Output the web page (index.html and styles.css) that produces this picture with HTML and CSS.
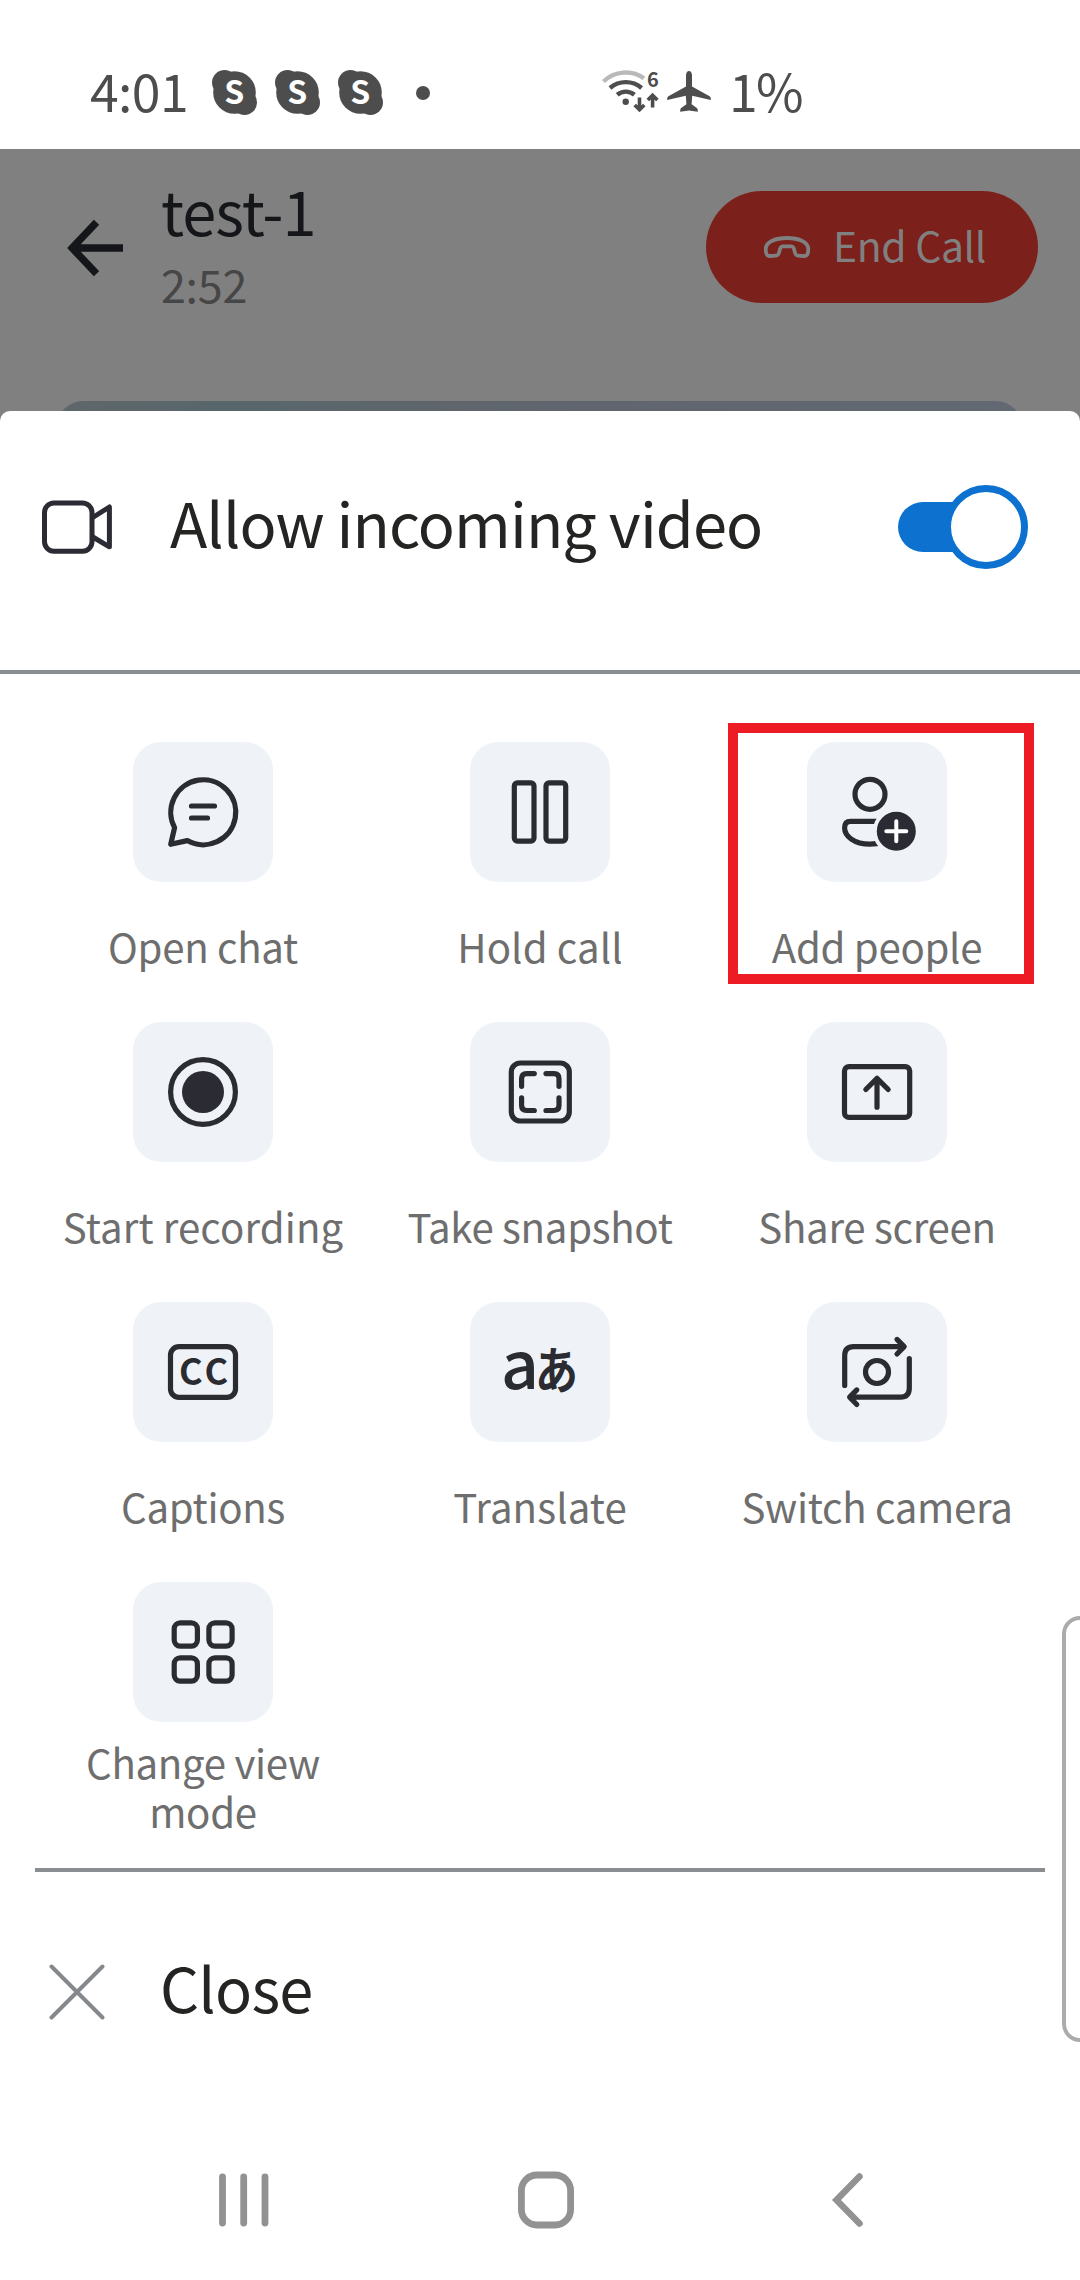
FILE: index.html
```html
<!DOCTYPE html>
<html lang="en">
<head>
<meta charset="utf-8">
<title>Call options</title>
<link rel="stylesheet" href="styles.css">
</head>
<body>
<div class="screen">
  <div class="status">
    <span class="status-text clock">4:01</span>
    <div class="notifs">
      <svg width="45" height="45" viewBox="0 0 45 45">
        <circle cx="22.5" cy="22.5" r="21.3"/><circle cx="12.5" cy="12.5" r="12.5"/><circle cx="32.5" cy="32.5" r="12.5"/>
        <text class="skype-s" x="22.3" y="34" text-anchor="middle">S</text>
      </svg>
      <svg width="45" height="45" viewBox="0 0 45 45">
        <circle cx="22.5" cy="22.5" r="21.3"/><circle cx="12.5" cy="12.5" r="12.5"/><circle cx="32.5" cy="32.5" r="12.5"/>
        <text class="skype-s" x="22.3" y="34" text-anchor="middle">S</text>
      </svg>
      <svg width="45" height="45" viewBox="0 0 45 45">
        <circle cx="22.5" cy="22.5" r="21.3"/><circle cx="12.5" cy="12.5" r="12.5"/><circle cx="32.5" cy="32.5" r="12.5"/>
        <text class="skype-s" x="22.3" y="34" text-anchor="middle">S</text>
      </svg>
    </div>
    <span class="dot"></span>
    <svg class="wifi" width="60" height="49" viewBox="0 0 60 49" fill="none" stroke="#4d4d4d" stroke-width="4.4">
      <path d="M3.5 13.5A32 32 0 0 1 44 10.3" stroke="#b9b9b9"/>
      <path d="M10 20A24.3 24.3 0 0 1 41.6 20"/>
      <path d="M17.2 26.7A13.5 13.5 0 0 1 34.4 26.7"/>
      <circle cx="25.7" cy="33.7" r="3.2" fill="#4d4d4d" stroke="none"/>
      <path d="M39.5 29.5V42M34.7 37L39.5 41.8L44.3 37M52.6 39.5V27.5M47.8 32L52.6 27.2L57.4 32" stroke-width="3.6"/>
      <text class="wifi-gen" x="53" y="19" text-anchor="middle">6</text>
    </svg>
    <svg class="plane" width="44" height="44" viewBox="0 0 44 44" fill="#4d4d4d">
      <path d="M22 1C23.8 1 25 3 25 5.5V16.5L42.6 26.2C43.4 26.7 43.8 27.5 43.8 28.5V30L25.2 25.7L24.6 34.2L29.8 38C30.6 38.7 30.8 39.6 30.8 41.8L22 40.6L13.2 41.8C13.2 39.6 13.4 38.7 14.2 38L19.4 34.2L18.8 25.7L.2 30V28.5C.2 27.5.6 26.7 1.4 26.2L19 16.5V5.5C19 3 20.2 1 22 1Z"/>
    </svg>
    <span class="status-text battery">1%</span>
  </div>

  <header class="call-header">
    <div class="call-bar">
      <svg class="back" width="56" height="58" viewBox="0 0 56 58" fill="none" stroke="#15161a" stroke-width="7.4">
        <path d="M56 29H5M29.5 3.2L5.2 29L29.5 54.8"/>
      </svg>
      <div class="call-title">
        <div class="name">test-1</div>
        <div class="time">2:52</div>
      </div>
      <div class="end-call">
        <svg width="48" height="24" viewBox="0 0 48 24" fill="none" stroke="#808080" stroke-width="3.8" stroke-linejoin="round">
          <path d="M24 3C35 3 45.3 6.5 45.3 14C45.3 19.5 43.8 21 41 21C38 21 35.5 20.6 34 20.3C30.5 19.5 32.5 11.3 28.5 11.3H19.5C15.5 11.3 17.5 19.5 14 20.3C12.5 20.6 10 21 7 21C4.2 21 2.7 19.5 2.7 14C2.7 6.5 13 3 24 3Z"/>
        </svg>
        <span>End Call</span>
      </div>
    </div>
    <div class="video-card"></div>
  </header>

  <main class="sheet">
    <div class="allow">
      <svg width="71" height="54" viewBox="0 0 71 54" fill="none" stroke="#2b2b33" stroke-width="5" stroke-linejoin="round">
        <rect x="2.5" y="3" width="47.5" height="48.2" rx="9.5"/>
        <path d="M50 18L67.4 7V46.8L50 36.5"/>
      </svg>
      <span class="allow-text">Allow incoming video</span>
      <span class="toggle"><span class="knob"></span></span>
    </div>

    <div class="options">
      <div class="option">
        <svg class="tile" viewBox="0 0 140 140">
          <path d="M41.6 85.6A32.5 32.5 0 1 1 54.3 98.6L37.7 102.3Z"/>
          <path d="M58.5 64H81.500M58.5 76H74.5"/>
        </svg>
        <div class="label">Open chat</div>
      </div>
      <div class="option">
        <svg class="tile" viewBox="0 0 140 140">
          <rect x="44.3" y="40.9" width="19.7" height="58.2" rx="3"/><rect x="76" y="40.9" width="19.7" height="58.2" rx="3"/>
        </svg>
        <div class="label loose">Hold call</div>
      </div>
      <div class="option">
        <svg class="tile" viewBox="0 0 140 140">
          <circle cx="63" cy="52.3" r="15"/>
          <path d="M76 79.3H43.5Q37.6 79.3 37.6 86C37.6 94 47 102.1 63 102.1Q70 102.1 76 100"/>
          <circle class="badge" cx="89.3" cy="89.3" r="21.5"/>
          <path class="plus" d="M79.3 89.3H99.300M89.3 79.3V99.3"/>
        </svg>
        <div class="label">Add people</div>
        <div class="marker"></div>
      </div>
      <div class="option">
        <svg class="tile" viewBox="0 0 140 140">
          <circle cx="70" cy="70" r="32.4"/><circle class="solid" cx="70" cy="70" r="21"/>
        </svg>
        <div class="label loose">Start recording</div>
      </div>
      <div class="option">
        <svg class="tile" viewBox="0 0 140 140">
          <rect x="41.3" y="41" width="58" height="58" rx="9"/>
          <path d="M51.6 64.3V56.6Q51.6 51.6 56.6 51.6H64.300M76 51.6H84Q89 51.6 89 56.6V64.300M89 75.8V83.5Q89 88.5 84 88.5H76M64.3 88.5H56.6Q51.6 88.5 51.6 83.5V75.8"/>
        </svg>
        <div class="label">Take snapshot</div>
      </div>
      <div class="option">
        <svg class="tile" viewBox="0 0 140 140">
          <rect x="37.5" y="44.6" width="65.2" height="50.8" rx="4.5"/>
          <path d="M70 85.2V57M58.8 67.5L70 56.3L81.2 67.5"/>
        </svg>
        <div class="label">Share screen</div>
      </div>
      <div class="option">
        <svg class="tile" viewBox="0 0 140 140">
          <rect x="37.5" y="44.6" width="65" height="50.8" rx="8.5"/>
          <text class="cc" x="46" y="83.3" textLength="49" lengthAdjust="spacing">CC</text>
        </svg>
        <div class="label">Captions</div>
      </div>
      <div class="option">
        <svg class="tile" viewBox="0 0 140 140">
          <text class="latin" x="31" y="87">a</text>
          <text class="kana" x="65" y="86.5" textLength="43" lengthAdjust="spacingAndGlyphs">あ</text>
        </svg>
        <div class="label loose">Translate</div>
      </div>
      <div class="option">
        <svg class="tile" viewBox="0 0 140 140">
          <circle cx="70" cy="70" r="11.5"/>
          <path d="M37.7 83.5V53.7Q37.7 44.7 46.7 44.7H96M90 37.4L97.2 44.7L90 52M102.3 56.5V86Q102.3 95.2 93.3 95.2H44M49.8 87.9L42.6 95.2L49.8 102.5"/>
        </svg>
        <div class="label">Switch camera</div>
      </div>
      <div class="option">
        <svg class="tile" viewBox="0 0 140 140">
          <rect x="41.2" y="40.9" width="23.2" height="23.2" rx="6"/><rect x="75.9" y="40.9" width="23.2" height="23.2" rx="6"/>
          <rect x="41.2" y="75.9" width="23.2" height="23.2" rx="6"/><rect x="75.9" y="75.9" width="23.2" height="23.2" rx="6"/>
        </svg>
        <div class="label">Change view<br>mode</div>
      </div>
    </div>

    <div class="close-row">
      <svg width="56" height="56" viewBox="0 0 56 56" fill="none" stroke="#85888d" stroke-width="4" stroke-linecap="round">
        <path d="M2.5 2.5L53.5 53.500M53.5 2.5L2.5 53.5"/>
      </svg>
      <span class="close-text">Close</span>
    </div>

    <nav class="nav">
      <svg width="50" height="58" viewBox="0 0 50 58" fill="none" stroke="#929292" stroke-width="6.8" stroke-linecap="round">
        <path d="M3.5 6V52M24.7 6V52M46 6V52"/>
      </svg>
      <svg class="home" width="58" height="58" viewBox="0 0 58 58" fill="none" stroke="#929292" stroke-width="6.8">
        <rect x="4.4" y="4" width="49.2" height="50" rx="15.5"/>
      </svg>
      <svg width="34" height="58" viewBox="0 0 34 58" fill="none" stroke="#929292" stroke-width="6.5" stroke-linecap="round">
        <path d="M29.5 5.5L6.5 29L29.5 52.5"/>
      </svg>
    </nav>
  </main>
  <div class="edge-handle"></div>
</div>
</body>
</html>
```
FILE: styles.css
```css
* { box-sizing: border-box; }

body {
  margin: 0;
  background: #fff;
  font-family: "Noto Sans CJK JP", "Noto Sans", sans-serif;
  font-weight: 400;
}

svg { display: block; flex: none; }

.screen {
  position: relative;
  width: 1080px;
  height: 2280px;
  overflow: hidden;
  background: #808080;
  white-space: nowrap;
}

/* Status bar */
.status {
  display: flex;
  align-items: center;
  height: 149px;
  padding: 36px 0 0 90px;
  background: #fff;
  color: #4d4d4d;
}

.status-text {
  padding-bottom: 5px;
  font-size: 51.7px;
  line-height: 60px;
}

.clock { width: 122px; letter-spacing: -.6px; }
.battery { margin-left: 18px; letter-spacing: -1.7px; }
.notifs { display: flex; gap: 18px; fill: #4d4d4d; }
.skype-s { fill: #fff; font-size: 32px; font-weight: 700; }
.dot { width: 14px; height: 14px; margin-left: 33px; border-radius: 50%; background: #4d4d4d; }
.wifi { margin-left: 170px; }
.wifi-gen { fill: #4d4d4d; stroke: none; font-size: 20px; font-weight: 700; }
.plane { margin: -1px 0 0 7px; }

/* Dimmed call screen */
.call-header { height: 262px; overflow: hidden; }

.call-bar {
  display: flex;
  align-items: flex-start;
  height: 252px;
  padding: 24px 42px 0 67px;
}

.back { margin-top: 46px; }
.call-title { flex: 1; padding-left: 38px; line-height: 74px; }
.name { color: #15161a; font-size: 61.3px; letter-spacing: -.9px; }
.time { color: #464646; font-size: 44.9px; letter-spacing: -.3px; }

.end-call {
  display: flex;
  align-items: center;
  gap: 22px;
  width: 332px;
  height: 112px;
  margin-top: 18px;
  padding-left: 57px;
  border-radius: 56px;
  background: #7b201b;
  color: #808080;
  font-size: 40.9px;
  line-height: 50px;
  letter-spacing: -.35px;
}

.end-call span { padding-bottom: 4px; }

.video-card {
  height: 60px;
  margin: 0 58px 0 57px;
  border-radius: 26px;
  background: linear-gradient(90deg, #5f676a, #57666b 18%, #5f666b 40%, #60656f 55%, #626972);
}

/* Bottom sheet */
.sheet { height: 1869px; border-radius: 10px 10px 0 0; background: #fff; }

.allow {
  display: flex;
  align-items: center;
  height: 263px;
  padding: 0 52px 27px 42px;
  border-bottom: 4px solid #8a8d91;
}

.allow-text {
  flex: 1;
  padding: 0 0 10px 57px;
  color: #242422;
  font-size: 61.3px;
  line-height: 74px;
  letter-spacing: -.9px;
}

.toggle {
  position: relative;
  display: flex;
  justify-content: flex-end;
  width: 130px;
  height: 84px;
}

.toggle::before {
  content: "";
  position: absolute;
  left: 0;
  top: 17px;
  width: 100px;
  height: 50px;
  border-radius: 25px;
  background: #0d71d0;
}

.knob {
  position: relative;
  width: 84px;
  height: 84px;
  border: 7px solid #0d71d0;
  border-radius: 50%;
  background: #fff;
}

.options {
  display: grid;
  grid-template-columns: repeat(3, 337px);
  grid-auto-rows: 266px;
  row-gap: 14px;
  margin: 0 35px;
  padding: 68px 0 20px;
  border-bottom: 4px solid #8a8d91;
}

.option { position: relative; left: -.5px; display: flex; flex-direction: column; align-items: center; }

.tile {
  width: 140px;
  height: 140px;
  border-radius: 28px;
  background: #eff3f8;
  fill: none;
  stroke: #2b2c31;
  stroke-width: 5.2px;
  stroke-linecap: round;
  stroke-linejoin: round;
}

.tile .solid { fill: #2b2b33; stroke: none; }
.tile .badge { fill: #2b2b33; stroke: #eff3f8; stroke-width: 4px; }
.tile .plus { stroke: #fff; stroke-width: 4px; }
.tile text { fill: #2b2c31; stroke: none; }
.tile .cc { font-size: 36px; font-weight: 700; }
.tile .latin { font-size: 66px; font-weight: 500; }
.tile .kana { font-size: 50px; font-weight: 700; }

.label {
  display: flex;
  align-items: center;
  height: 126px;
  padding-top: 1px;
  color: #6e6e6e;
  font-size: 40.2px;
  line-height: 49px;
  letter-spacing: -.3px;
  text-align: center;
}

.loose { letter-spacing: .1px; }

.marker {
  position: absolute;
  left: 19.5px;
  top: -19px;
  width: 306px;
  height: 261px;
  border: 10px solid #ed1c24;
}

.close-row { display: flex; align-items: center; height: 240px; padding-left: 49px; }

.close-text {
  padding: 0 0 10px 55px;
  color: #242422;
  font-size: 61.3px;
  line-height: 74px;
  letter-spacing: -.76px;
}

.nav {
  display: flex;
  align-items: center;
  justify-content: space-between;
  height: 168px;
  padding: 7px 216px 0 219px;
}

.home { margin-right: 8px; }

/* Edge panel handle, runs off the right side */
.edge-handle {
  position: absolute;
  left: 1062px;
  top: 1616px;
  width: 40px;
  height: 426px;
  border: 4px solid #ababab;
  border-radius: 18px;
}
```
